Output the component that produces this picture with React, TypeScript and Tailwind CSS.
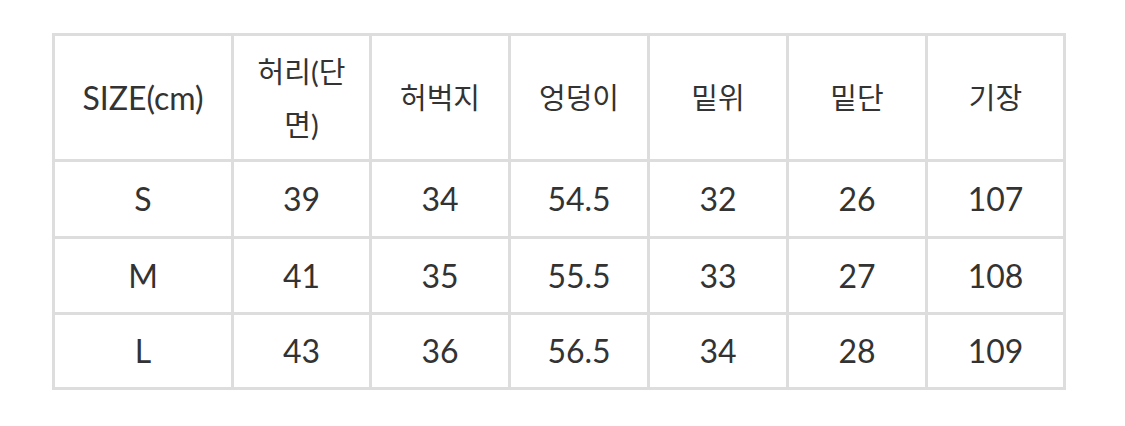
const headers = ['SIZE(cm)', '허리(단면)', '허벅지', '엉덩이', '밑위', '밑단', '기장']

const rows = [
  { h: 'h-[74px]', cells: ['S', '39', '34', '54.5', '32', '26', '107'] },
  { h: 'h-[73px]', cells: ['M', '41', '35', '55.5', '33', '27', '108'] },
  { h: 'h-[72px]', cells: ['L', '43', '36', '56.5', '34', '28', '109'] },
]

export default function App() {
  return (
    <div className="h-[426px] w-[1125px] bg-white pl-[52px] pt-[33px] text-[#333333] [font-family:Lato,'Noto_Sans_CJK_KR',sans-serif]">
      <div className="grid w-[1014px] grid-cols-[176px_135px_136px_136px_136px_136px_135px] gap-[3px] bg-[#dddddd] p-[3px]">
        {headers.map((h, i) => (
          <div
            key={h}
            className={`flex h-[123px] items-center justify-center bg-white text-center leading-[53px] ${i === 0 ? 'text-[32px]' : 'text-[29px]'}`}
          >
            {i === 1 ? (
              <span>
                허리(단
                <br />
                면)
              </span>
            ) : (
              h
            )}
          </div>
        ))}
        {rows.map((r) =>
          r.cells.map((c, i) => (
            <div key={r.cells[0] + i} className={`flex items-center justify-center bg-white text-[32px] ${r.h}`}>
              {c}
            </div>
          ))
        )}
      </div>
    </div>
  )
}
